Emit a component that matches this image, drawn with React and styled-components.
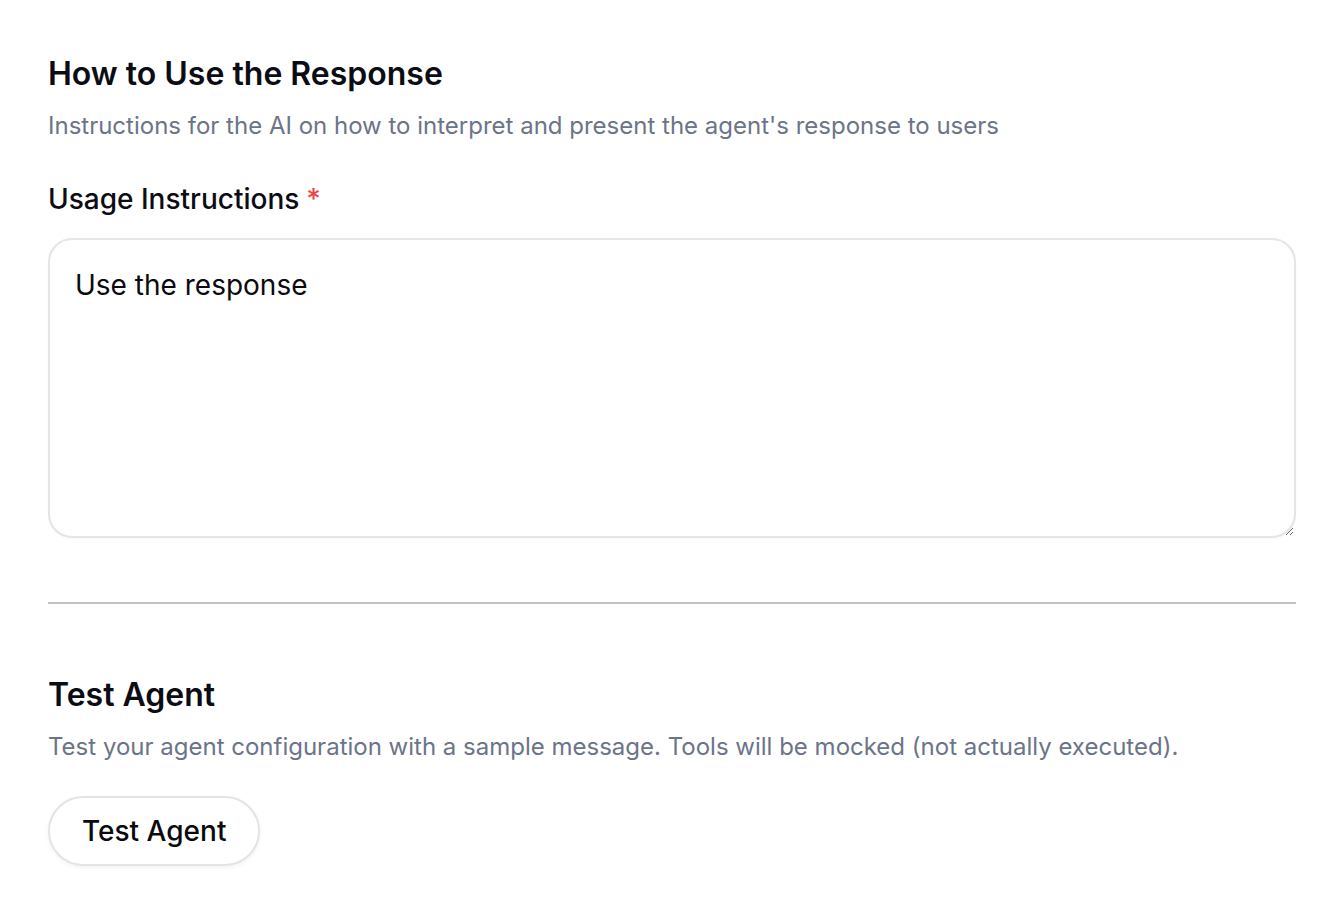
import styled, { createGlobalStyle } from "styled-components";

const GlobalStyle = createGlobalStyle`
  * { box-sizing: border-box; }
  body {
    margin: 0;
    background: #ffffff;
    font-family: Inter, "Noto Sans", sans-serif;
    color: #0a0a0f;
  }
`;

const Page = styled.main`
  padding: 52px 28px 40px 48px;
`;

const Section = styled.section`
  display: flex;
  flex-direction: column;
`;

const Title = styled.h2`
  margin: 0;
  font-size: 32px;
  line-height: 44px;
  font-weight: 600;
  color: #0b0c14;
`;

const Description = styled.p`
  margin: 13px 0 0;
  font-size: 24px;
  line-height: 34px;
  color: #6b7488;
`;

const Field = styled.div`
  display: flex;
  flex-direction: column;
  margin-top: 36px;
`;

const Label = styled.label`
  font-size: 28px;
  line-height: 40px;
  font-weight: 500;
  color: #0b0c14;
`;

const Required = styled.span`
  color: #ef4444;
  margin-left: 7px;
`;

const TextArea = styled.textarea`
  margin-top: 19px;
  width: 100%;
  height: 300px;
  padding: 25px 25px;
  border: 2px solid #e5e5e7;
  border-radius: 24px;
  font-family: inherit;
  font-size: 28px;
  line-height: 40px;
  color: #0a0a0f;
  background: #fff;
  box-shadow: 0 1px 2px rgba(0, 0, 0, 0.03);
  resize: vertical;
  outline: none;
`;

const Divider = styled.hr`
  margin: 64px 0 0;
  border: none;
  height: 2px;
  background: #bfc1cc;
`;

const TestSection = styled(Section)`
  margin-top: 69px;
`;

const Button = styled.button`
  align-self: flex-start;
  margin-top: 32px;
  height: 70px;
  padding: 0 32px;
  border: 2px solid #e4e4e6;
  border-radius: 999px;
  background: #fff;
  box-shadow: 0 2px 4px rgba(0, 0, 0, 0.05);
  font-family: inherit;
  font-size: 28px;
  font-weight: 500;
  color: #0a0a0f;
  cursor: pointer;
`;

export default function App() {
  return (
    <>
      <GlobalStyle />
      <Page>
        <Section>
          <Title>How to Use the Response</Title>
          <Description>
            Instructions for the AI on how to interpret and present the agent's response to users
          </Description>
          <Field>
            <Label htmlFor="usage">
              Usage Instructions<Required>*</Required>
            </Label>
            <TextArea id="usage" defaultValue="Use the response" />
          </Field>
        </Section>
        <Divider />
        <TestSection>
          <Title>Test Agent</Title>
          <Description>
            Test your agent configuration with a sample message. Tools will be mocked (not actually executed).
          </Description>
          <Button type="button">Test Agent</Button>
        </TestSection>
      </Page>
    </>
  );
}
